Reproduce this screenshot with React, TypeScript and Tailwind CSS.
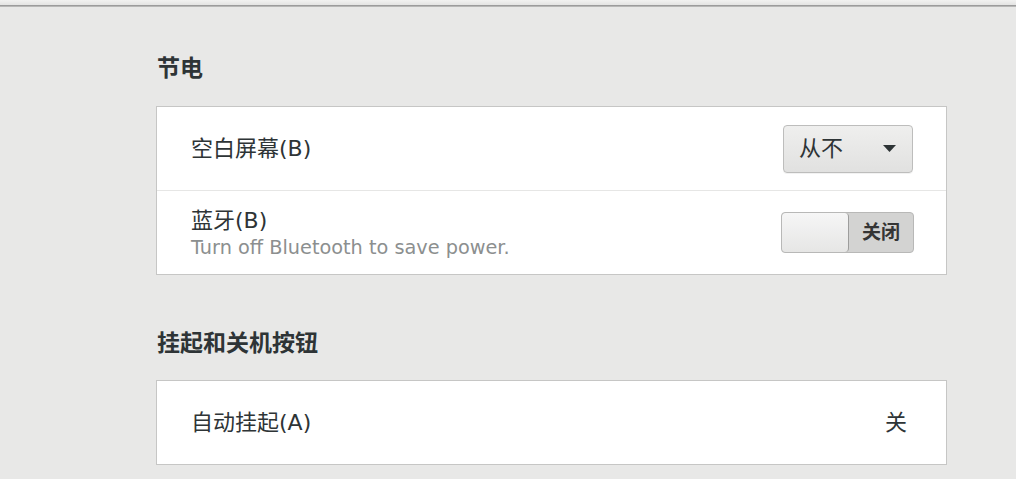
export default function App() {
  const font = { fontFamily: '"DejaVu Sans", "Noto Sans CJK SC", sans-serif' };

  return (
    <div className="w-[1016px] h-[479px] overflow-hidden bg-[#e8e8e7] text-[#2e3436]" style={font}>
      <div className="h-[5px] bg-gradient-to-b from-[#f2f2f1] to-[#e4e4e3]" />
      <div className="h-[1px] bg-[#9c9c9c]" />
      <div className="h-[1px] bg-[#b8b8b7]" />

      <div className="ml-[156px] w-[791px]">
        <h2 className="mt-[46px] mb-[23px] pl-[1px] h-[30px] leading-[30px] text-[23px] font-bold">节电</h2>

        <div className="bg-white border border-[#c6c6c5]">
          <div className="h-[83px] flex items-center justify-between pl-[34px] pr-[33px]">
            <span className="text-[22px]">空白屏幕(B)</span>
            <button className="w-[130px] h-[48px] flex items-center justify-between pl-[15px] pr-[16px] rounded-[4px] border border-[#bdbdbc] bg-gradient-to-b from-[#efefee] to-[#e1e1e0] shadow-[0_1px_0_rgba(0,0,0,0.05)]">
              <span className="text-[22px]">从不</span>
              <svg width="13" height="7" viewBox="0 0 13 7">
                <path d="M0 0 H13 L6.5 7 Z" fill="#2e3436" />
              </svg>
            </button>
          </div>
          <div className="h-[1px] bg-[#e6e6e5]" />
          <div className="h-[83px] flex items-center justify-between pl-[34px] pr-[32px]">
            <div className="flex flex-col pt-[2px]">
              <span className="text-[22px] leading-[28px]">蓝牙(B)</span>
              <span className="text-[19.3px] leading-[26px] text-[#8c8f8f]">Turn off Bluetooth to save power.</span>
            </div>
            <div className="w-[133px] h-[41px] flex rounded-[4px] border border-[#b8b8b7] bg-[#d3d3d2] overflow-hidden">
              <div className="w-[67px] h-full rounded-[4px] border-r border-[#9d9d9c] bg-gradient-to-b from-[#f6f6f6] to-[#e6e6e5]" />
              <div className="flex-1 flex items-center justify-center text-[19px] font-bold text-[#353535]">关闭</div>
            </div>
          </div>
        </div>

        <h2 className="mt-[53px] mb-[22px] pl-[1px] h-[30px] leading-[30px] text-[23px] font-bold">挂起和关机按钮</h2>

        <div className="bg-white border border-[#c6c6c5]">
          <div className="h-[83px] flex items-center justify-between pl-[34px] pr-[39px]">
            <span className="text-[22px]">自动挂起(A)</span>
            <span className="text-[22px]">关</span>
          </div>
        </div>
      </div>
    </div>
  );
}
